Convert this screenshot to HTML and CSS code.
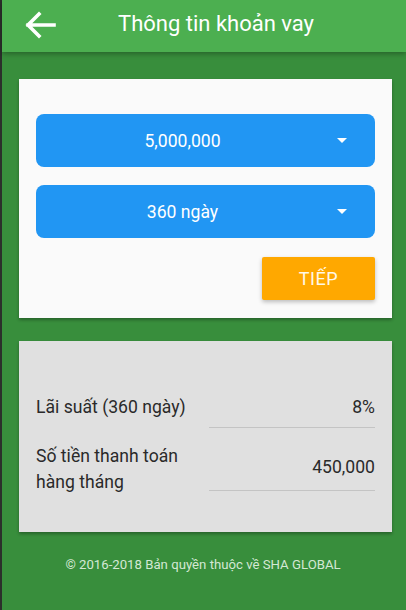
FILE: index.html
```html
<!DOCTYPE html>
<html lang="vi">
<head>
<meta charset="utf-8">
<title>Thông tin khoản vay</title>
<link rel="stylesheet" href="styles.css">
</head>
<body>
<div class="app">
  <header class="topbar">
    <svg class="back" width="34" height="28" viewBox="0 0 34 28">
      <path d="M30 14H4 M15 3 L4 14 L15 25" fill="none" stroke="#fff" stroke-width="3.6" stroke-linecap="square" stroke-linejoin="miter"/>
    </svg>
    <h1 class="title">Thông tin khoản vay</h1>
  </header>

  <section class="card card-form">
    <div class="select">
      <span class="select-text">5,000,000</span>
      <span class="caret"></span>
    </div>
    <div class="select">
      <span class="select-text">360 ngày</span>
      <span class="caret"></span>
    </div>
    <div class="actions">
      <button class="btn-next">TIẾP</button>
    </div>
  </section>

  <section class="card card-info">
    <div class="row">
      <div class="label label-1">Lãi suất (360 ngày)</div>
      <div class="value value-1">8%</div>
    </div>
    <div class="row">
      <div class="label label-2">Số tiền thanh toán<br>hàng tháng</div>
      <div class="value value-2">450,000</div>
    </div>
  </section>

  <footer class="footer">© 2016-2018 Bản quyền thuộc về SHA GLOBAL</footer>
</div>
</body>
</html>
```

FILE: styles.css
```css
* { box-sizing: border-box; }
html, body {
  margin: 0;
  padding: 0;
}
body {
  width: 406px;
  height: 610px;
  overflow: hidden;
  background: #388e3c;
  font-family: Roboto, "Noto Sans", "Liberation Sans", sans-serif;
}
.app {
  height: 610px;
  border-left: 2px solid #2b2f2b;
  background: #388e3c;
}
.topbar {
  height: 52px;
  background: #4caf50;
  display: flex;
  align-items: center;
  box-shadow: 0 2px 5px rgba(0, 0, 0, 0.3);
  position: relative;
}
.back {
  margin-left: 22px;
  margin-top: -3px;
  flex: none;
}
.title {
  margin: -5px 0 0 60px;
  font-size: 22px;
  font-weight: 400;
  color: #fff;
}
.card {
  margin-left: 17px;
  width: 373px;
  box-shadow: 0 2px 3px rgba(0, 0, 0, 0.3);
}
.card-form {
  margin-top: 27px;
  background: #fafafa;
  padding: 35px 17px 18px 17px;
}
.select {
  height: 53px;
  border-radius: 8px;
  background: #2196f3;
  display: flex;
  align-items: center;
  color: #fff;
  font-size: 17.6px;
}
.select + .select { margin-top: 18px; }
.select-text {
  flex: 1;
  text-align: center;
}
.caret {
  width: 0;
  height: 0;
  border-left: 5.5px solid transparent;
  border-right: 5.5px solid transparent;
  border-top: 5.5px solid #fff;
  margin: 0 28px 0 8px;
}
.actions {
  display: flex;
  justify-content: flex-end;
  margin-top: 19px;
}
.btn-next {
  width: 113px;
  height: 43px;
  border: 0;
  border-radius: 2px;
  background: #ffa800;
  color: #fff8e8;
  font-family: Roboto, "Noto Sans", "Liberation Sans", sans-serif;
  font-size: 18px;
  letter-spacing: 0.6px;
  box-shadow: 0 2px 4px rgba(0, 0, 0, 0.25);
  padding: 0;
}
.card-info {
  margin-top: 23px;
  background: #e0e0e0;
  padding: 53px 17px 37px 17px;
}
.row {
  display: flex;
  justify-content: space-between;
  align-items: flex-start;
  color: #2a2a2a;
  font-size: 17.6px;
}
.label { line-height: 26px; }
.label-2 { margin-top: 15px; }
.value {
  width: 166px;
  text-align: right;
  line-height: 20px;
  border-bottom: 1px solid #c4c4c4;
}
.value-1 { margin-top: 3px; padding-bottom: 10px; }
.value-2 { margin-top: 29px; padding-bottom: 13px; }
.footer {
  margin-top: 25px;
  text-align: center;
  font-size: 13.2px;
  color: #d4e8d4;
  padding-right: 2px;
}
```
